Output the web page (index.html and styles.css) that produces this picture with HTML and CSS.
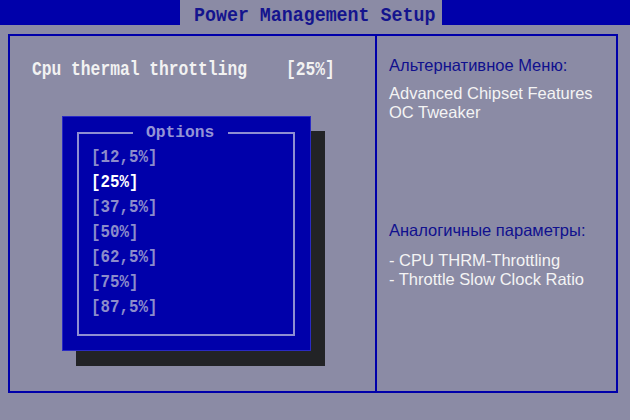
FILE: index.html
```html
<!DOCTYPE html>
<html lang="ru">
<head>
  <meta charset="UTF-8">
  <title>Power Management Setup</title>
  <link rel="stylesheet" href="styles.css">
</head>
<body>

<div class="topbar">
  <div class="bar-fill bar-left"></div>
  <div class="bar-title"><span class="tall">Power Management Setup</span></div>
  <div class="bar-fill"></div>
</div>

<div class="frame">
  <div class="settings">
    <div class="setting"><span class="tall">Cpu thermal throttling    [25%]</span></div>

    <div class="popup">
      <fieldset class="options">
        <legend>Options</legend>
        <ul class="option-list">
          <li>[12,5%]</li>
          <li class="selected">[25%]</li>
          <li>[37,5%]</li>
          <li>[50%]</li>
          <li>[62,5%]</li>
          <li>[75%]</li>
          <li>[87,5%]</li>
        </ul>
      </fieldset>
    </div>
  </div>

  <div class="help">
    <div class="help-block">
      <div class="help-title">Альтернативное Меню:</div>
      <div>Advanced Chipset Features</div>
      <div>OC Tweaker</div>
    </div>
    <div class="help-block related">
      <div class="help-title">Аналогичные параметры:</div>
      <div>- CPU THRM-Throttling</div>
      <div>- Throttle Slow Clock Ratio</div>
    </div>
  </div>
</div>

</body>
</html>
```

FILE: styles.css
```css
body {
  margin: 0;
  width: 630px;
  height: 420px;
  background: #8b8ba5;
  font-family: "Liberation Mono", monospace;
  font-weight: bold;
  overflow: hidden;
}

/* bios glyphs are taller than Liberation Mono, so stretch them a bit */
.tall {
  display: inline-block;
  white-space: pre;
}

/* top title bar */
.topbar {
  display: flex;
  height: 25px;
}

.bar-fill {
  flex: 1;
  background: #0000aa;
}

.bar-left {
  flex: 0 0 180px;
}

.bar-title {
  width: 262px;
  padding-left: 14px;
  box-sizing: border-box;
  color: #14148e;
  font-size: 18.3px;
  line-height: 25px;
}

.bar-title .tall {
  transform: translateY(3px) scaleY(1.12);
}

/* main frame */
.frame {
  display: grid;
  grid-template-columns: 367px 1fr;
  margin: 9px 12px 0 8px;
  height: 359px;
  box-sizing: border-box;
  border: 2px solid #0000aa;
}

.settings {
  border-right: 2px solid #0000aa;
  padding: 24px 0 0 22px;
}

.setting {
  color: #f2f2f2;
  font-size: 16.3px;
  line-height: 20px;
}

.setting .tall {
  transform: scaleY(1.24);
}

/* options popup */
.popup {
  width: 249px;
  height: 235px;
  box-sizing: border-box;
  margin: 36px 0 0 30px;
  background: #0000aa;
  border: 1px solid #2a2ac4;
  box-shadow: 14px 15px 0 #222326;
  padding: 6px 0 0 14px;
}

.options {
  width: 218px;
  height: 213px;
  box-sizing: border-box;
  margin: 0;
  padding: 0;
  border: 2px solid #8e8ed2;
}

.options legend {
  margin-left: 54px;
  padding: 0 14px 0 13px;
  color: #9494d6;
  font-size: 16.3px;
  line-height: 20px;
}

.option-list {
  list-style: none;
  margin: 3px 0 0;
  padding: 0 0 0 12px;
  color: #8c8cca;
  font-size: 15.8px;
  line-height: 25px;
}

.option-list li {
  white-space: pre;
  transform: scaleY(1.12);
}

.option-list .selected {
  color: #ffffff;
}

/* help column */
.help {
  padding: 20px 8px 0 12px;
  font-family: "Liberation Sans", Arial, sans-serif;
  font-weight: normal;
  font-size: 16.5px;
  line-height: 19px;
  color: #f4f4f4;
}

.help-title {
  color: #10108e;
  margin-bottom: 9px;
}

.related {
  margin-top: 99px;
}

.related .help-title {
  margin-bottom: 11px;
}
```
